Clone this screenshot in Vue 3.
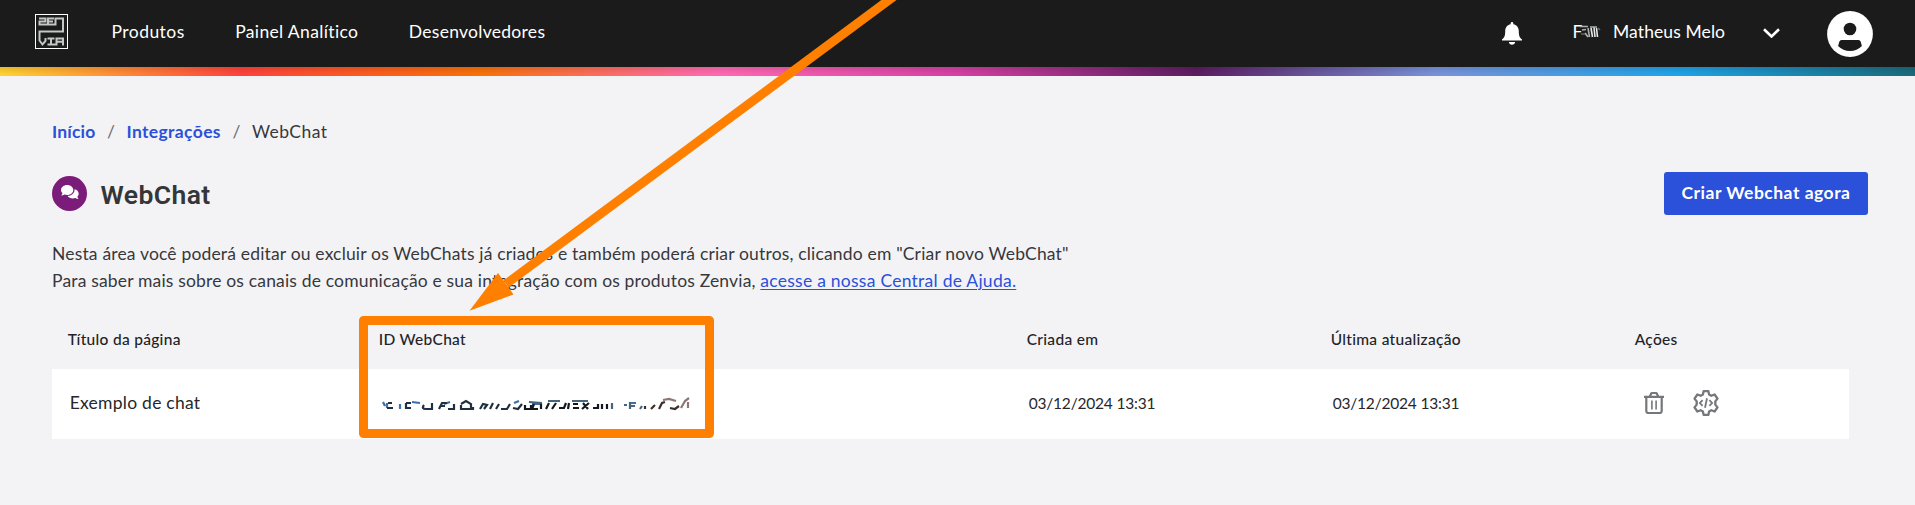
<script setup>
const menu = [
  { label: 'Produtos', cls: 'sp45' },
  { label: 'Painel Analítico', cls: 'sp36' },
  { label: 'Desenvolvedores', cls: 'sp28' },
]
const columns = ['Título da página', 'ID WebChat', 'Criada em', 'Última atualização', 'Ações']
const row = { title: 'Exemplo de chat', created: '03/12/2024 13:31', updated: '03/12/2024 13:31' }
</script>

<template>
  <div class="page">
    <header class="topbar">
      <svg class="logo" viewBox="0 0 33 35" fill="none">
        <rect x=".5" y=".5" width="32" height="34" stroke="#fff" />
        <path stroke="#c3c7c5" stroke-width="2" d="M4 4.500H10.500V7.500H4.500V10.500H20.500V4.500H28V17.500H4.500V26.500L7.500 30.500L10.500 27V24M19 4.500H13V10.500M13 7.500H18M12.500 24.500H19.500M16 24.500V30.500M12.500 30.500H21.500V24.500H28V31.500M21.500 27.800H28" />
      </svg>
      <nav class="menu"><a v-for="m in menu" :key="m.label" :class="m.cls">{{ m.label }}</a></nav>
      <svg class="bell" viewBox="0 0 20 23" fill="#fff"><path d="M10 0c.9 0 1.300.6 1.300 1.500v.7c3.700.7 5.500 3.500 5.500 7 0 4.300.7 6.300 3.200 8.200v1H0v-1c2.500-1.900 3.200-3.900 3.200-8.200 0-3.500 1.800-6.300 5.500-7v-.7C8.700.6 9.100 0 10 0zM6.800 20h6.400c-.4 1.900-1.500 2.700-3.200 2.700S7.200 21.900 6.800 20z" /></svg>
      <span class="org">F
        <svg class="org-smudge" viewBox="0 0 22 14" fill="none" stroke-width="1.600">
          <path stroke="#a9b3ae" d="M0 1.500H8M2 5L6 4.500M5 8L8 12M8 3L9.500 12M10 2H17" />
          <path stroke="#e4e8e6" d="M11 3L12.500 12M14 2.500L15 12M16.500 3L17.500 12" />
          <path stroke="#5c6a63" d="M1 9H5M18 3L20 5" />
        </svg>
      </span>
      <span class="user">Matheus Melo</span>
      <svg class="chev" viewBox="0 0 17 10" fill="none" stroke="#fff" stroke-width="2.600"><path d="M1 1.200l7.500 7.300L16 1.200" /></svg>
      <svg class="avatar" viewBox="0 0 46 46">
        <circle cx="23" cy="23" r="22.900" fill="#fff" />
        <circle cx="23" cy="18" r="6.300" fill="#1b1b1b" />
        <path d="M14.500 29h17q1.700 0 2.200 1.700l1.200 4.300q-4.900 5-11.900 5t-11.900-5l1.200-4.300q.5-1.700 2.200-1.700z" fill="#1b1b1b" />
      </svg>
    </header>
    <div class="rainbow"></div>

    <main>
      <nav class="crumbs">
        <a class="sp20">Início</a><i>/</i><a class="sp35">Integrações</a><i>/</i><span class="sp45">WebChat</span>
      </nav>

      <div class="title-row">
        <span class="badge">
          <svg viewBox="0 0 18 15" fill="#fff">
            <path d="M6.200 0C9.600 0 12.300 2.200 12.300 5S9.600 10 6.200 10c-1 0-1.900-.2-2.700-.5-.9.6-2 .9-3.300.9.600-.7 1.200-1.500 1.300-2.300C.6 7.300 0 6.200 0 5c0-2.800 2.800-5 6.200-5z" />
            <path d="M13.500 4.200C16 4.700 17.700 6.500 17.700 8.700c0 1.100-.5 2.200-1.300 3 .1.800.6 1.600 1.300 2.200-1.300 0-2.500-.3-3.300-.9-.8.300-1.700.5-2.600.5-2.200 0-4.200-1-5.200-2.500C10.500 10.800 13.500 8.200 13.500 5z" />
          </svg>
        </span>
        <h1>WebChat</h1>
        <button class="cta">Criar Webchat agora</button>
      </div>

      <p class="intro">
        Nesta área você poderá editar ou excluir os WebChats já criados e também poderá criar outros, clicando em "Criar novo WebChat"<br>
        Para saber mais sobre os canais de comunicação e sua integração com os produtos Zenvia, <a>acesse a nossa Central de Ajuda.</a>
      </p>

      <section class="table">
        <div class="grid head"><span v-for="c in columns" :key="c">{{ c }}</span></div>
        <div class="grid body">
          <span class="name">{{ row.title }}</span>
          <span>
            <svg class="id-smudge" viewBox="0 0 312 20" fill="none" stroke-width="2.200">
              <path stroke="#3d6fa8" d="M1 6L3 10M5 7V12M18 8V13M30 6L38 7M62 8L68 6M132 7L137 5M150 8H158M248 7H254" />
              <path stroke="#20303e" d="M6 7H10M5 12H11M24 7V13M24 7H29M24 12H29M42 9Q39 13 44 13M50 7V13H42M57 13L60 7H65M58 10H63M66 13H72V8M79 8L84 5L89 8V13H79V9M91 11V14M98 13L101 8L105 9L102 13M108 13L111 7M114 13L117 8M119 13H125L128 8M131 12L136 13L140 8" />
              <path stroke="#14181d" d="M143 9V13H149V9M152 8L150 13H156M159 7V13M164 13L167 7M170 13L174 7M177 12H182L184 7M187 7L186 13M191 8H196M191 12H197M201 7L206 13M207 7L200 13M211 12H216V8M220 8V13M225 8V13" />
              <path stroke="#47647b" d="M147 6L160 7M166 5H178M190 5H206M230 7V13M242 9H245M248 6V13M248 10H253M258 13L260 10" />
              <path stroke="#3c2f2b" d="M263 13V10M269 13L273 9M277 13L280 7L283 6M288 12L293 13L297 10" />
              <path stroke="#8c7772" d="M281 4L287 3L294 5M299 12L303 5L307 2M306 6V12" />
            </svg>
          </span>
          <span class="date">{{ row.created }}</span>
          <span class="date">{{ row.updated }}</span>
          <span class="actions">
            <svg class="trash" viewBox="0 0 20 22" fill="none" stroke="#76777a" stroke-width="2.200">
              <path d="M0 4.800H20M2.300 5V19Q2.300 21 4.300 21H15.700Q17.700 21 17.700 19V5M5.800 4.500L7 2Q7.300 1 8.300 1H11.700Q12.700 1 13 2L14.200 4.500" />
              <path stroke-width="1.600" d="M7.900 8.500V17.500M12.100 8.500V17.500" />
            </svg>
            <svg class="gear" viewBox="0 0 26 26" fill="none" stroke="#76777a">
              <path stroke-width="2.300" stroke-linejoin="round" d="M10.600 1.200H15.400L16.100 4.600L18.300 5.800L21.600 4.500L24.500 8.600L22.300 11.400V14.600L24.500 17.400L21.600 21.500L18.300 20.200L16.100 21.400L15.400 24.800H10.600L9.900 21.400L7.700 20.200L4.400 21.500L1.500 17.400L3.700 14.600V11.400L1.500 8.600L4.400 4.500L7.700 5.800L9.900 4.600Z" />
              <path stroke-width="1.800" d="M9.600 10.200L6.900 13L9.600 15.800M16.400 10.200L19.100 13L16.400 15.800M14 8.300L12 17.800" />
            </svg>
          </span>
        </div>
      </section>
    </main>

    <svg class="annotation" viewBox="0 0 1915 505">
      <path d="M895 -4.500L506 284" stroke="#ff8000" stroke-width="9" fill="none" />
      <path d="M498 273L513.500 294.500L469.500 310.700Z" fill="#ff8000" />
      <rect x="363.500" y="320.500" width="346" height="113" fill="none" stroke="#ff8000" stroke-width="9" />
    </svg>
  </div>
</template>

<style scoped>
.page { position: relative; min-height: 505px; background: #f3f3f5; color: #37383c; font: 17.500px/24px Lato, "Open Sans", sans-serif; overflow: hidden; }
.topbar { box-sizing: border-box; height: 67px; padding: 0 42px 4px 35px; background: #1b1b1b; color: #fff; display: flex; align-items: center; }
.logo { width: 33px; height: 35px; margin-right: 43.500px; }
.menu { display: flex; gap: 50.500px; flex: 1; }
.menu, .org, .user { padding-top: 1px; }
.bell { width: 20px; height: 23px; margin: 4px 51px 0 0; }
.org { width: 40.500px; display: flex; align-items: center; }
.org-smudge { width: 22px; height: 14px; margin-left: -2px; filter: blur(.6px); }
.user { width: 112px; white-space: nowrap; letter-spacing: .1px; }
.chev { width: 17px; height: 10px; margin: 2px 47.500px 0 37.500px; }
.avatar { width: 46px; height: 46px; margin-top: 5px; }
.rainbow { height: 9px; background: linear-gradient(#0000001c, #0000 80%), linear-gradient(90deg, #ffd230, #ff423c 12.500%, #f87108 25%, #ff68b2 37.500%, #d63fa4 50%, #5b1c60 62.500%, #7892da 75%, #1fa3e8 87.500%, #196a7b); }

.sp20 { letter-spacing: .2px; }
.sp28 { letter-spacing: .28px; }
.sp35 { letter-spacing: .35px; }
.sp36 { letter-spacing: .36px; }
.sp45 { letter-spacing: .45px; }

main { padding: 44px 47px 0 52px; }
.crumbs { display: flex; height: 24px; }
.crumbs a { color: #2b50da; font-weight: 700; }
.crumbs i { width: 31px; text-align: center; font-style: normal; color: #6d6e72; }
.title-row { display: flex; align-items: center; height: 43px; margin-top: 28px; }
.badge { width: 35px; height: 35px; border-radius: 50%; background: #7c1c7a; display: flex; align-items: center; justify-content: center; }
.badge svg { width: 18px; height: 15px; margin: -2px 0 0 1px; }
h1 { flex: 1; margin: 2px 0 0 13.500px; font: 600 26.500px/32px Roboto, sans-serif; letter-spacing: .4px; color: #353638; }
.cta { box-sizing: border-box; width: 204px; height: 43px; padding: 0 0 2px; border: 0; border-radius: 3px; background: #2b50da; color: #fff; font: 700 17.500px/24px Lato, sans-serif; letter-spacing: .5px; }
.intro { margin: 24.700px 0 0; line-height: 27px; letter-spacing: .17px; white-space: nowrap; }
.intro a { color: #2b50da; letter-spacing: .256px; text-decoration: underline; text-decoration-thickness: 1px; text-underline-offset: 1.500px; }

.table { width: 1797px; margin-top: 15.300px; }
.grid { display: grid; grid-template-columns: 311px 648px 304px 304px 1fr; align-items: center; }
.grid span { white-space: nowrap; }
.head { height: 60px; color: #222327; font-size: 15.500px; font-weight: 500; letter-spacing: .3px; }
.head span { padding-left: 15.700px; }
.body { height: 70px; padding-bottom: 1px; box-sizing: border-box; background: #fff; color: #26272b; }
.body span { padding-left: 17.700px; }
.name { letter-spacing: .25px; }
.date { font-size: 15.500px; letter-spacing: -.2px; }
.id-smudge { display: block; width: 312px; height: 20px; margin: 6px 0 0 1.300px; filter: blur(.7px); }
.body .actions { display: flex; align-items: center; gap: 29px; padding-left: 25px; }
.trash { width: 20px; height: 22px; }
.gear { width: 26px; height: 26px; }
.annotation { position: absolute; left: 0; top: 0; width: 1915px; height: 505px; pointer-events: none; }
.annotation rect { stroke-linejoin: round; }
</style>
<style>body { margin: 0; }</style>
